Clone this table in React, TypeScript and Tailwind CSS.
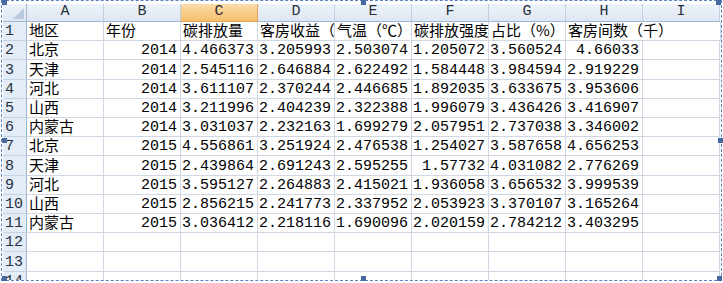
import React from 'react'

const cols = ['A', 'B', 'C', 'D', 'E', 'F', 'G', 'H', 'I']

type Cell = { v: string; num?: boolean; clip?: boolean; spill?: boolean }

const header: Cell[] = [
  { v: '地区' },
  { v: '年份' },
  { v: '碳排放量' },
  { v: '客房收益（万元）', clip: true },
  { v: '气温（℃）' },
  { v: '碳排放强度（吨）', clip: true },
  { v: '占比（%）' },
  { v: '客房间数（千）', spill: true },
  { v: '' },
]

const data: string[][] = [
  ['北京', '2014', '4.466373', '3.205993', '2.503074', '1.205072', '3.560524', '4.66033'],
  ['天津', '2014', '2.545116', '2.646884', '2.622492', '1.584448', '3.984594', '2.919229'],
  ['河北', '2014', '3.611107', '2.370244', '2.446685', '1.892035', '3.633675', '3.953606'],
  ['山西', '2014', '3.211996', '2.404239', '2.322388', '1.996079', '3.436426', '3.416907'],
  ['内蒙古', '2014', '3.031037', '2.232163', '1.699279', '2.057951', '2.737038', '3.346002'],
  ['北京', '2015', '4.556861', '3.251924', '2.476538', '1.254027', '3.587658', '4.656253'],
  ['天津', '2015', '2.439864', '2.691243', '2.595255', '1.57732', '4.031082', '2.776269'],
  ['河北', '2015', '3.595127', '2.264883', '2.415021', '1.936058', '3.656532', '3.999539'],
  ['山西', '2015', '2.856215', '2.241773', '2.337952', '2.053923', '3.370107', '3.165264'],
  ['内蒙古', '2015', '3.036412', '2.218116', '1.690096', '2.020159', '2.784212', '3.403295'],
]

const rowH = [
  'h-[19px]', 'h-[19px]', 'h-[20px]', 'h-[19px]', 'h-[19px]', 'h-[19px]', 'h-[19px]',
  'h-[20px]', 'h-[19px]', 'h-[19px]', 'h-[19px]', 'h-[19px]', 'h-[20px]', 'h-[19px]',
]

const cjk = "font-['Noto_Sans_CJK_SC',sans-serif] text-[15px]"
const mono = "font-['Liberation_Mono',monospace] text-[15px]"

function rowsOf(): Cell[][] {
  const out: Cell[][] = [header]
  data.forEach((r) => {
    out.push([
      { v: r[0] },
      ...r.slice(1).map((v) => ({ v, num: true })),
      { v: '' },
    ])
  })
  while (out.length < 14) out.push(cols.map(() => ({ v: '' })))
  return out
}

function Handle({ className }: { className: string }) {
  return <div className={`absolute w-[5px] h-[5px] bg-[#46699f] ${className}`} />
}

export default function App() {
  const rows = rowsOf()

  return (
    <div className="relative w-[723px] h-[283px] bg-white overflow-hidden">
      {/* object frame */}
      <div className="h-[281px] w-[721px] ml-[1px] border border-dashed border-[#5b82c0] overflow-hidden">
        <div className="pl-[1px] pt-[3px]">
          {/* Column headers */}
          <div className="flex h-[18px]">
            <div className="relative w-[24px] shrink-0 bg-linear-to-b from-[#eef3fa] to-[#dfe7f2] border-r border-b border-[#9eb6ce]">
              <div className="absolute right-[2px] bottom-[2px] w-0 h-0 border-l-[11px] border-l-transparent border-b-[11px] border-b-[#b8c9de]" />
            </div>
            {cols.map((c) =>
              c === 'C' ? (
                <div
                  key={c}
                  className={`w-[77px] shrink-0 flex items-center justify-center bg-linear-to-b from-[#fbdcaa] to-[#f6bf6c] border-r border-b border-[#e0a256] text-[#2b2b2b] ${mono}`}
                >
                  {c}
                </div>
              ) : (
                <div
                  key={c}
                  className={`w-[77px] shrink-0 flex items-center justify-center bg-linear-to-b from-[#eef3fa] to-[#dfe7f2] border-r border-r-[#c3d0e0] border-b border-b-[#9eb6ce] text-[#27313f] ${mono}`}
                >
                  {c}
                </div>
              )
            )}
          </div>

          {/* Rows */}
          {rows.map((r, i) => (
            <div key={i} className={`flex ${rowH[i]}`}>
              <div
                className={`w-[24px] shrink-0 flex items-end pl-[2px] pb-[1px] bg-[#e4ecf7] border-r border-r-[#9eb6ce] border-b border-b-[#c5d3e3] text-[#27313f] leading-none ${mono}`}
              >
                {i + 1}
              </div>
              {r.map((cell, j) => (
                <div
                  key={j}
                  className={`w-[77px] shrink-0 flex items-end pb-[1px] border-b border-[#d0d7e5] ${
                    cell.spill ? 'border-r-0 w-[78px]' : 'border-r'
                  } ${cell.clip ? 'overflow-hidden' : ''} ${
                    cell.num ? `justify-end pr-[3px] ${mono} leading-none` : `pl-[2px] ${cjk} leading-[18px]`
                  } text-black whitespace-nowrap`}
                >
                  {cell.v}
                </div>
              ))}
            </div>
          ))}
        </div>
      </div>

      <Handle className="left-[2px] top-0 h-[3px]" />
      <Handle className="left-[361px] top-0 h-[4px]" />
      <Handle className="right-[2px] top-0 h-[3px]" />
      <Handle className="left-[2px] top-[138px]" />
      <Handle className="left-[718px] top-[138px]" />
      <Handle className="left-[2px] top-[276px]" />
      <Handle className="left-[361px] top-[276px]" />
      <Handle className="left-[717px] top-[276px]" />
    </div>
  )
}
